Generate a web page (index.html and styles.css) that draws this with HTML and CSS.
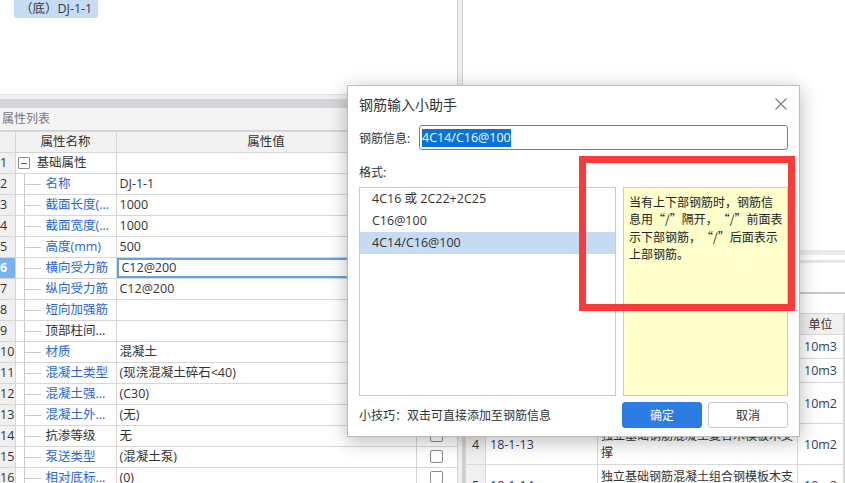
FILE: index.html
```html
<!DOCTYPE html>
<html lang="zh-CN">
<head>
    <meta charset="UTF-8">
    <meta name="viewport" content="width=device-width, initial-scale=1.0">
    <title>钢筋输入小助手</title>
    <link rel="stylesheet" href="styles.css">
</head>
<body>
    <div class="app">
        <div class="left">
            <div class="tree">
                <div class="tree-item">（底）DJ-1-1</div>
            </div>
            <div class="hsplit"></div>
            <div class="panel-title">属性列表</div>
            <table class="props">
                <colgroup>
                    <col class="c-num"><col class="c-name"><col class="c-val"><col class="c-ck">
                </colgroup>
                <tr>
                    <th class="num"></th><th>属性名称</th><th>属性值</th><th>附加</th>
                </tr>
                <tr>
                    <td class="num">1</td>
                    <td class="grp"><span class="toggle"></span>基础属性</td>
                    <td></td><td></td>
                </tr>
                <tr><td class="num">2</td><td class="nm">名称</td><td>DJ-1-1</td><td class="ck"><span></span></td></tr>
                <tr><td class="num">3</td><td class="nm">截面长度(...</td><td>1000</td><td class="ck"><span></span></td></tr>
                <tr><td class="num">4</td><td class="nm">截面宽度(...</td><td>1000</td><td class="ck"><span></span></td></tr>
                <tr><td class="num">5</td><td class="nm">高度(mm)</td><td>500</td><td class="ck"><span></span></td></tr>
                <tr><td class="num on">6</td><td class="nm">横向受力筋</td><td class="edit">C12@200</td><td class="ck"><span></span></td></tr>
                <tr><td class="num">7</td><td class="nm">纵向受力筋</td><td>C12@200</td><td class="ck"><span></span></td></tr>
                <tr><td class="num">8</td><td class="nm">短向加强筋</td><td></td><td class="ck"><span></span></td></tr>
                <tr><td class="num">9</td><td class="nm blk">顶部柱间...</td><td></td><td class="ck"><span></span></td></tr>
                <tr><td class="num">10</td><td class="nm">材质</td><td>混凝土</td><td class="ck"><span></span></td></tr>
                <tr><td class="num">11</td><td class="nm">混凝土类型</td><td>(现浇混凝土碎石&lt;40)</td><td class="ck"><span></span></td></tr>
                <tr><td class="num">12</td><td class="nm">混凝土强...</td><td>(C30)</td><td class="ck"><span></span></td></tr>
                <tr><td class="num">13</td><td class="nm">混凝土外...</td><td>(无)</td><td class="ck"><span></span></td></tr>
                <tr><td class="num">14</td><td class="nm blk">抗渗等级</td><td>无</td><td class="ck"><span></span></td></tr>
                <tr><td class="num">15</td><td class="nm">泵送类型</td><td>(混凝土泵)</td><td class="ck"><span></span></td></tr>
                <tr><td class="num">16</td><td class="nm">相对底标...</td><td>(0)</td><td class="ck"><span></span></td></tr>
            </table>
        </div>

        <div class="vsplit"></div>

        <div class="right">
            <div class="r-blank"></div>
            <div class="r-strip"></div>
            <div class="r-toolbar"></div>
            <div class="r-items">
                <table class="items">
                    <colgroup>
                        <col class="i-num"><col class="i-code"><col class="i-name"><col class="i-unit"><col>
                    </colgroup>
                    <tr><th></th><th>编码</th><th>名称</th><th>单位</th><th></th></tr>
                    <tr><td class="num">1</td><td class="code">5-1-7</td><td>独立基础 混凝土</td><td class="unit">10m3</td><td></td></tr>
                    <tr><td class="num">2</td><td class="code">5-1-47</td><td>现浇混凝土泵送增加费</td><td class="unit">10m3</td><td></td></tr>
                    <tr><td class="num">3</td><td class="code">18-1-12</td><td>独立基础钢筋混凝土胶合板模板木支撑</td><td class="unit">10m2</td><td></td></tr>
                    <tr><td class="num">4</td><td class="code">18-1-13</td><td>独立基础钢筋混凝土复合木模板木支撑</td><td class="unit">10m2</td><td></td></tr>
                    <tr><td class="num">5</td><td class="code">18-1-14</td><td>独立基础钢筋混凝土组合钢模板木支撑</td><td class="unit">10m2</td><td></td></tr>
                </table>
            </div>
        </div>
    </div>

    <!-- 钢筋输入小助手 对话框 -->
    <div class="dialog">
        <div class="dlg-title">
            <span>钢筋输入小助手</span>
            <svg class="close" width="12" height="12" viewBox="0 0 12 12">
                <path d="M0.5 0.5L11.5 11.5M11.5 0.5L0.5 11.5" stroke="#7b7b7b" stroke-width="1.1" fill="none"/>
            </svg>
        </div>
        <div class="field">
            <label>钢筋信息:</label>
            <div class="input"><span class="sel">4C14/C16@100</span></div>
        </div>
        <div class="fmt-label">格式:</div>
        <div class="boxes">
            <ul class="list">
                <li>4C16 或 2C22+2C25</li>
                <li>C16@100</li>
                <li class="active">4C14/C16@100</li>
            </ul>
            <div class="note">当有上下部钢筋时，钢筋信<br>息用<span class="qo">“</span>/<span class="qc">”</span>隔开，<span class="qo">“</span>/<span class="qc">”</span>前面表<br>示下部钢筋，<span class="qo">“</span>/<span class="qc">”</span>后面表示<br>上部钢筋。</div>
        </div>
        <div class="dlg-foot">
            <span class="tip">小技巧：双击可直接添加至钢筋信息</span>
            <button class="btn primary">确定</button>
            <button class="btn">取消</button>
        </div>
    </div>

    <!-- 红色标注框 -->
    <div class="mark"></div>
</body>
</html>
```

FILE: styles.css
```css
* {
    box-sizing: border-box;
}

body {
    margin: 0;
    width: 845px;
    height: 483px;
    overflow: hidden;
    position: relative;
    font-family: "Open Sans", "Noto Sans CJK SC", sans-serif;
    font-size: 12px;
    color: #333;
    background: #fff;
}

.app {
    display: flex;
    height: 483px;
}

/* 左侧 */
.left {
    width: 457px;
    display: flex;
    flex-direction: column;
    overflow: hidden;
}

.tree {
    height: 95px;
    flex: none;
    border-bottom: 1px solid #e0e0e0;
}

.tree-item {
    display: inline-block;
    margin-left: 14px;
    padding: 0 6px;
    height: 18px;
    line-height: 17px;
    background: #c6dcf4;
    border-radius: 0 0 3px 3px;
    font-size: 12.5px;
    color: #3a3a3a;
}

.hsplit {
    height: 13px;
    flex: none;
    border-top: 4px solid #f0f0f0;
    background: #d3d5d9;
}

.panel-title {
    height: 23px;
    flex: none;
    line-height: 22px;
    padding-left: 2px;
    background: #f4f4f4;
    border-bottom: 1px solid #d2d2d2;
    color: #777;
}

.props {
    width: 457px;
    table-layout: fixed;
    border-collapse: collapse;
}

.c-num { width: 15px; }
.c-name { width: 101px; }
.c-val { width: 300px; }
.c-ck { width: 41px; }

.props th,
.props td {
    height: 21px;
    padding: 0 0 0 3px;
    line-height: 20px;
    border: 1px solid #d6d6d6;
    white-space: nowrap;
    overflow: hidden;
    font-size: 12.5px;
    text-align: left;
}

.props th {
    background: #f2f2f2;
    font-weight: normal;
    text-align: center;
    padding: 0;
}

.props td.num,
.props th.num {
    background: #f0f0f0;
    padding: 0;
    border-left: none;
}

.props td.num.on {
    background: #78b3f0;
    color: #fff;
    font-weight: bold;
}

.props td.grp {
    padding-left: 2px;
    color: #333;
}

.toggle {
    display: inline-block;
    width: 12px;
    height: 12px;
    margin-right: 7px;
    vertical-align: -2px;
    border: 1px solid #8a8a8a;
    border-radius: 1px;
    background: linear-gradient(#555, #555) center / 6px 1px no-repeat, #fff;
}

.props td.nm {
    padding-left: 30px;
    color: #2b65d9;
    background:
        linear-gradient(#cbcbcb, #cbcbcb) 8px 0 / 1px 100% no-repeat,
        linear-gradient(#cbcbcb, #cbcbcb) 9px 50% / 16px 1px no-repeat;
}

.props td.nm.blk {
    color: #333;
}

.props td.edit {
    padding-left: 5px;
    box-shadow: inset 0 0 0 2px #66a2e2;
}

.props td.ck {
    text-align: center;
    padding: 0;
}

.props td.ck span {
    display: inline-block;
    width: 13px;
    height: 13px;
    vertical-align: -2px;
    border: 1px solid #8c8c8c;
    border-radius: 2px;
    background: #fff;
}

.vsplit {
    width: 6px;
    flex: none;
    background: #efefef;
    border-left: 1px solid #d2d2d2;
    border-right: 1px solid #d2d2d2;
}

/* 右侧 */
.right {
    flex: 1;
    display: flex;
    flex-direction: column;
    overflow: hidden;
}

.r-blank {
    height: 250px;
    flex: none;
}

.r-strip {
    height: 13px;
    flex: none;
    border-top: 5px solid #ececec;
    border-bottom: 3px solid #e6e6e6;
}

.r-toolbar {
    height: 50px;
    flex: none;
    border-top: 29px solid #fff;
    background: linear-gradient(#c8c8c8, #c8c8c8) top / 100% 2px no-repeat;
}

.r-items {
    border-left: 2px solid #cdcdcd;
    flex: 1;
}

.items {
    width: 380px;
    table-layout: fixed;
    border-collapse: collapse;
    font-size: 12px;
}

.i-num { width: 20px; }
.i-code { width: 112px; }
.i-name { width: 200px; }
.i-unit { width: 46px; }

.items th,
.items td {
    padding: 3px 1px 3px 3px;
    line-height: 17px;
    border: 1px solid #d8d8d8;
    vertical-align: middle;
    text-align: left;
    overflow: hidden;
}

.items th {
    height: 21px;
    padding: 0 4px;
    background: #f0f0f0;
    font-weight: normal;
    text-align: center;
}

.items td.num {
    background: #f0f0f0;
    text-align: center;
    padding: 0;
    font-size: 12.5px;
}

.items td.code,
.items td.unit {
    color: #2e4068;
    white-space: nowrap;
    font-size: 12.5px;
}

.items td.code {
    padding-left: 4px;
}

.items td.unit {
    text-align: center;
    padding: 0;
}

/* 对话框 */
.dialog {
    position: absolute;
    left: 347px;
    top: 85px;
    width: 453px;
    height: 352px;
    padding: 0 11px 8px;
    display: flex;
    flex-direction: column;
    background: #fff;
    border: 1px solid #bdbdbd;
    box-shadow: 0 4px 18px rgba(0, 0, 0, 0.28);
}

.dlg-title {
    height: 36px;
    flex: none;
    display: flex;
    align-items: center;
    justify-content: space-between;
    font-size: 14px;
    color: #333;
}

.close {
    margin-right: 1px;
}

.field {
    margin-top: 3px;
    height: 25px;
    flex: none;
    display: flex;
    align-items: center;
}

.field label {
    width: 60px;
}

.input {
    flex: 1;
    height: 25px;
    display: flex;
    align-items: center;
    padding: 0 2px;
    border: 1px solid #3c8de4;
    border-radius: 3px;
    font-size: 12.5px;
}

.sel {
    background: #0a72d8;
    color: #fff;
    line-height: 18px;
}

.fmt-label {
    margin-top: 14px;
    line-height: 18px;
    flex: none;
}

.boxes {
    margin-top: 5px;
    height: 209px;
    flex: none;
    display: flex;
    gap: 7px;
}

.list {
    flex: 1;
    margin: 0;
    padding: 0;
    list-style: none;
    border: 1px solid #cbcbcb;
    font-size: 12.5px;
}

.list li {
    height: 22px;
    line-height: 22px;
    padding-left: 12px;
}

.list li.active {
    background: #c5dbf1;
}

.note {
    width: 165px;
    flex: none;
    padding: 5px 0 0 5px;
    background: #ffffcc;
    border: 1px solid #cbcbcb;
    font-family: "Noto Sans CJK SC", sans-serif;
    line-height: 17.3px;
    white-space: nowrap;
    color: #222;
}

/* 全角引号 */
.note .qo,
.note .qc {
    display: inline-block;
    width: 12px;
}

.note .qo {
    text-align: right;
}

.note .qc {
    text-align: left;
}

.dlg-foot {
    margin-top: 6px;
    height: 26px;
    flex: none;
    display: flex;
    align-items: center;
    gap: 6px;
}

.tip {
    flex: 1;
}

.btn {
    width: 80px;
    height: 26px;
    padding: 0;
    font-family: inherit;
    font-size: 12px;
    color: #333;
    background: #fff;
    border: 1px solid #c8c8c8;
    border-radius: 3px;
}

.btn.primary {
    background: #2b7de1;
    border-color: #2b7de1;
    color: #fff;
}

/* 标注 */
.mark {
    position: absolute;
    left: 579px;
    top: 156px;
    width: 216px;
    height: 155px;
    border: 7px solid #fb3b3b;
}
```
